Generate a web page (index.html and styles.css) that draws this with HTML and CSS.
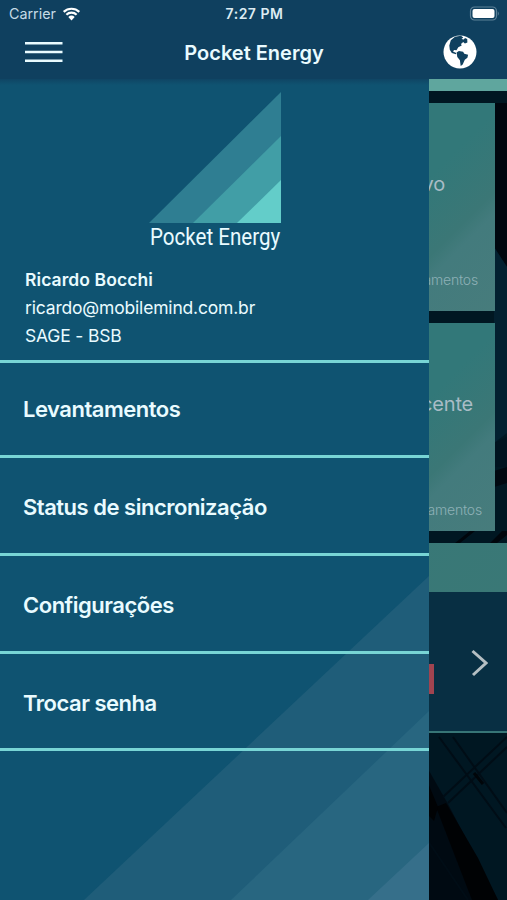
FILE: index.html
```
<!DOCTYPE html>
<html lang="pt-BR">
<head>
  <meta charset="UTF-8" />
  <meta name="viewport" content="width=device-width, initial-scale=1" />
  <title>Pocket Energy</title>
  <link rel="stylesheet" href="styles.css">
</head>
<body>

  <header class="header">
    <div class="status-bar">
      <div class="carrier">
        <span>Carrier</span>
        <svg class="wifi" viewBox="0 0 18 14" width="19" height="14">
          <path d="M1.2 4.9a11.2 11.2 0 0 1 15.6 0M3.9 7.8a7.3 7.3 0 0 1 10.2 0" />
          <path class="wifi-dot" d="M5.8 10a4.7 4.7 0 0 1 6.4 0L9 13.5z" />
        </svg>
      </div>
      <div class="clock">7:27 PM</div>
      <div class="battery">
        <svg viewBox="0 0 31 15" width="31" height="15">
          <rect x="1.5" y="1" width="26" height="13" rx="4" fill="none" stroke="#5d8198" stroke-width="1.2" />
          <rect x="3.5" y="3" width="22" height="9" rx="2" fill="#fff" />
          <path d="M28.8 5.2q2 2.3 0 4.6z" fill="#5d8198" />
        </svg>
      </div>
    </div>
    <div class="nav-bar">
      <button class="menu-btn" aria-label="Menu">
        <svg viewBox="0 0 38 22" width="38" height="22">
          <path d="M0 2.3h37.5M0 11h37.5M0 19.7h37.5" />
        </svg>
      </button>
      <h1>Pocket Energy</h1>
      <button class="globe-btn" aria-label="Idioma">
        <svg viewBox="0 0 34 34" width="34" height="34">
          <circle cx="17" cy="17" r="16.5" fill="#fff" />
          <path fill="#0f405f" d="M7.8 5.2L12 1.8l6-1 2.2 1.8-1.7 1.3 2.3.7 1.2-1.7 2.2 1.2.2 3.3-2.5 1-1.7-1.3-2.2 1.8.7 1.5-3.4 1.9-1.8 3-2.4-.3-1.1 1.6 3.2 1.5-.2 1.2-4.2-1.4-2-3.2-.5-4.1z" />
          <path fill="#0f405f" d="M13.6 17.4l2.3-1.3 4.2.7 1.2 1.9 3.8 1-.7 3-2.6 2.1-2.1 4.8-2 1.5-.8-5.9-2.6-3.2z" />
        </svg>
      </button>
    </div>
  </header>

  <div class="screen">
    <main class="page">
      <svg class="backdrop" viewBox="0 0 79 821" width="79" height="821">
        <rect width="79" height="821" fill="#001722" />
        <path d="M66 24h13v164l-13-20z" fill="#00070f" />
        <path d="M66 168l13 20v166l-13 10z" fill="#032030" />
        <path d="M66 364l13-6v30H66z" fill="#00131f" />
        <path d="M66 392l13-4v16l-13 4z" fill="#000810" />
        <path d="M27 464l15-12h5l-15 12zM62 464l12-12h5v4l-10 8z" fill="#00060c" />
        <path d="M0 690l20 35 50 96H0z" fill="#000a12" />
        <path d="M8 728l10-4 32 55 20 42H44z" fill="#000204" />
        <path d="M0 704l10 24-4 14-6-6z" fill="#000204" />
        <path class="beam" d="M11 658l67 91M25 658l54 76" />
        <path class="beam" d="M79 658L15 718M79 668L20 724" />
        <path class="beam" d="M0 762l40 59" />
        <path class="beam-joint" d="M46 694l9 11" />
      </svg>

      <div class="page-strip"></div>
      <section class="cards">
        <article class="card card-active">
          <h2>Ativo</h2>
          <p>levantamentos</p>
        </article>
        <article class="card card-recent">
          <h2>Recente</h2>
          <p>levantamentos</p>
        </article>
      </section>
      <div class="section-bar"></div>
      <div class="list-row">
        <span class="tag"></span>
        <svg class="chevron" viewBox="0 0 18 28" width="18" height="28">
          <path d="M2.5 2L16 14 3 26" />
        </svg>
      </div>
    </main>

    <aside class="drawer">
      <svg class="drawer-art" viewBox="0 0 429 324" width="429" height="324">
        <path d="M429 0v324H84z" fill="#1f5d79" />
        <path d="M429 135v189H231z" fill="#286680" />
        <path d="M429 267v57h-61z" fill="#366f8a" />
      </svg>

      <div class="logo">
        <svg viewBox="0 0 132 132" width="132" height="132">
          <path d="M132 0v131H0z" fill="#2f7e92" />
          <path d="M132 44v87H44z" fill="#419ea6" />
          <path d="M132 88v43H88z" fill="#63cdc9" />
        </svg>
        <div class="logo-name">Pocket Energy</div>
      </div>

      <div class="user">
        <div class="user-name">Ricardo Bocchi</div>
        <div class="user-mail">ricardo@mobilemind.com.br</div>
        <div class="user-unit">SAGE - BSB</div>
      </div>

      <nav class="menu">
        <a>Levantamentos</a>
        <a>Status de sincronização</a>
        <a>Configurações</a>
        <a>Trocar senha</a>
      </nav>
    </aside>
  </div>

</body>
</html>
```
FILE: styles.css
```
* { box-sizing: border-box; }

body {
  margin: 0;
  height: 900px;
  overflow: hidden;
  display: flex;
  flex-direction: column;
  background-color: #001722;
  color: #e9fbff;
  font-family: Inter, "Liberation Sans", sans-serif;
}

button {
  padding: 0;
  border: none;
  background: none;
}

/* header */
.header {
  height: 79px;
  background-color: #0f405f;
}

.status-bar {
  height: 27px;
  padding: 0 7px 0 9px;
  display: grid;
  grid-template-columns: 1fr auto 1fr;
  align-items: center;
}

.carrier {
  display: flex;
  align-items: center;
  gap: 6px;
  font-size: 14.3px;
  color: #c5dbe6;
}

.wifi path {
  fill: none;
  stroke: #fff;
  stroke-width: 2.2;
}

.wifi .wifi-dot {
  fill: #fff;
  stroke: none;
}

.clock {
  font-size: 14px;
  font-weight: 600;
  letter-spacing: 0.5px;
  color: #dcebf2;
}

.battery {
  display: flex;
  justify-content: flex-end;
}

.nav-bar {
  height: 50px;
  padding: 0 30px 0 25px;
  display: grid;
  grid-template-columns: 1fr auto 1fr;
  align-items: center;
}

.nav-bar h1 {
  margin: 1px 0 0 6px;
  font-size: 20px;
  font-weight: 600;
}

.menu-btn,
.globe-btn {
  display: flex;
}

.menu-btn path {
  stroke: #e9fbff;
  stroke-width: 2.4;
}

.globe-btn {
  justify-self: end;
}

/* page behind the drawer */
.screen {
  position: relative;
  height: 821px;
}

.page {
  position: relative;
  z-index: 0;
  height: 821px;
}

.backdrop {
  position: absolute;
  top: 0;
  right: 0;
  z-index: -1;
}

.beam {
  fill: none;
  stroke: #000d16;
  stroke-width: 2;
}

.beam-joint {
  stroke: #000509;
  stroke-width: 3;
}

.page-strip {
  height: 12px;
  background-color: #5fa69e;
}

.cards {
  padding: 12px;
  display: flex;
  flex-direction: column;
  gap: 12px;
}

.card {
  width: 236px;
  height: 208px;
  margin-left: auto;
  display: flex;
  flex-direction: column;
  align-items: flex-end;
  background: linear-gradient(135deg, #327879 55%, #3b7776 73%, #437b7d 78%, #477c7c 100%);
}

.card h2 {
  margin: 67px 0 0;
  font-size: 20px;
  font-weight: 400;
  letter-spacing: -0.2px;
  line-height: 28px;
  color: #a9bcc6;
}

.card p {
  margin: 72px 0 0;
  font-size: 14px;
  font-weight: 300;
  letter-spacing: -0.2px;
  line-height: 20px;
  color: #8db0b6;
}

.card-active h2 { margin-right: 50px; }
.card-active p { margin-right: 17px; }
.card-recent h2 { margin-right: 22px; }
.card-recent p { margin: 82px 13px 0 0; }

.section-bar {
  height: 49px;
  background: linear-gradient(135deg, #337879, #3a7876);
}

.list-row {
  height: 141px;
  padding: 2px 19px 0 0;
  display: flex;
  align-items: center;
  justify-content: flex-end;
  gap: 36px;
  background-color: #082f43;
  border-bottom: 2px solid #377576;
}

.tag {
  width: 90px;
  height: 30px;
  margin-top: 32px;
  background-color: #a04450;
}

.chevron path {
  fill: none;
  stroke: #b5bfc3;
  stroke-width: 3;
}

/* drawer */
.drawer {
  position: absolute;
  top: 0;
  left: 0;
  width: 429px;
  height: 821px;
  background: linear-gradient(#0f4564, #0f5371 6px);
}

.drawer-art {
  position: absolute;
  left: 0;
  bottom: 0;
}

.logo {
  position: relative;
  width: 132px;
  margin: 0 auto;
  padding-top: 13px;
}

.logo svg {
  display: block;
}

.logo-name {
  padding-left: 1px;
  font-family: Roboto, sans-serif;
  font-size: 23px;
  line-height: 27px;
  white-space: nowrap;
  transform: scaleX(0.895);
  transform-origin: left;
}

.user {
  position: relative;
  padding: 15px 25px 0;
  font-size: 17.5px;
  line-height: 28px;
}

.user-name {
  font-weight: 600;
  letter-spacing: 0.08px;
}

.user-mail,
.user-unit {
  letter-spacing: -0.18px;
}

.menu {
  position: relative;
  margin-top: 10px;
  border-top: 3px solid #78d5d5;
}

.menu a {
  height: 97.7px;
  padding: 3px 0 0 23px;
  display: flex;
  align-items: center;
  border-bottom: 3px solid #78d5d5;
  font-size: 22px;
  font-weight: 600;
  letter-spacing: -0.49px;
}

.menu a:first-child {
  height: 95.4px;
  padding-top: 0;
}
```
